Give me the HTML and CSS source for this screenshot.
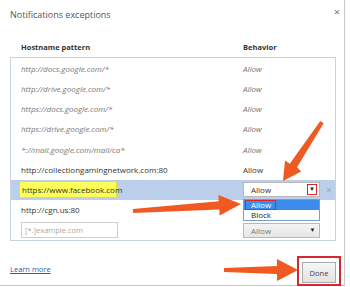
FILE: index.html
```html
<!DOCTYPE html>
<html lang="en">
<head>
    <meta charset="UTF-8">
    <title>Notifications exceptions</title>
    <link rel="stylesheet" href="styles.css">
</head>
<body>
    <div class="dialog">
        <div class="title-bar">
            <h1>Notifications exceptions</h1>
            <span class="close">&times;</span>
        </div>

        <div class="columns">
            <span class="col-host">Hostname pattern</span>
            <span class="col-behavior">Behavior</span>
        </div>

        <div class="list">
            <div class="row muted">
                <span class="host">http://docs.google.com/*</span>
                <span class="behavior">Allow</span>
            </div>
            <div class="row muted">
                <span class="host">http://drive.google.com/*</span>
                <span class="behavior">Allow</span>
            </div>
            <div class="row muted">
                <span class="host">https://docs.google.com/*</span>
                <span class="behavior">Allow</span>
            </div>
            <div class="row muted">
                <span class="host">https://drive.google.com/*</span>
                <span class="behavior">Allow</span>
            </div>
            <div class="row muted">
                <span class="host">*://mail.google.com/mail/ca*</span>
                <span class="behavior">Allow</span>
            </div>
            <div class="row">
                <span class="host">http://collectiongamingnetwork.com:80</span>
                <span class="behavior">Allow</span>
            </div>
            <div class="row selected">
                <span class="host"><span class="marker">https://www.facebook.com</span></span>
                <span class="behavior">
                    <span class="select open">
                        Allow
                        <span class="select-arrow boxed">&#9660;</span>
                    </span>
                    <span class="remove">&times;</span>
                    <span class="menu">
                        <span class="option active"><span class="ring">Allow</span></span>
                        <span class="option">Block</span>
                    </span>
                </span>
            </div>
            <div class="row">
                <span class="host">http://cgn.us:80</span>
                <span class="behavior"></span>
            </div>
            <div class="row">
                <span class="host"><input type="text" class="pattern" placeholder="[*.]example.com"></span>
                <span class="behavior">
                    <span class="select grey">
                        Allow
                        <span class="select-arrow">&#9660;</span>
                    </span>
                </span>
            </div>
        </div>

        <div class="footer">
            <a href="#" class="learn">Learn more</a>
            <span class="done-ring"><button type="button" class="done">Done</button></span>
        </div>
    </div>

    <!-- orange callout arrows drawn over the screenshot -->
    <svg class="callouts" width="350" height="287" viewBox="0 0 350 287">
        <polygon points="323.7,123.3 297,167.2 301.2,171.5 283,181 285,160.5 289.8,163.8 320.3,121.0"/>
        <polygon points="133.2,213.0 219.3,209.6 219.7,215.6 241,204 218.4,195.0 218.7,201.2 132.8,209.0"/>
        <polygon points="224,272 277,274 277,281 298,270 277,259 277,266 224,268"/>
    </svg>
</body>
</html>
```

FILE: styles.css
```css
body {
    margin: 0;
    background: #fff;
    font-family: 'Segoe UI', 'Open Sans', 'Noto Sans', sans-serif;
    color: #333;
}

.dialog {
    width: 345px;
    height: 286px;
    box-sizing: border-box;
    padding: 0 10px;
    border-right: 1px solid #c8c8c8;
    border-bottom: 1px solid #c8c8c8;
    background: #fff;
}

.title-bar {
    display: flex;
    justify-content: space-between;
    align-items: flex-start;
    height: 36px;
    padding-top: 7px;
    box-sizing: border-box;
}

h1 {
    margin: 0;
    font-size: 9px;
    font-weight: normal;
    color: #555;
    line-height: 16px;
}

.close {
    font-size: 11px;
    line-height: 10px;
    color: #777;
    margin-right: -6px;
}

.columns {
    display: flex;
    height: 21px;
    align-items: center;
    padding-left: 11px;
    font-size: 7.5px;
    font-weight: bold;
    color: #333;
}

.col-host {
    width: 222px;
}

.list {
    width: 326px;
    height: 184px;
    box-sizing: border-box;
    border: 1px solid #c3d4e3;
}

.row {
    display: flex;
    align-items: center;
    height: 20.25px;
    padding-left: 10px;
    font-size: 8px;
    color: #333;
}

.row.muted {
    font-style: italic;
    color: #777;
}

.host {
    width: 222px;
    flex: none;
}

.behavior {
    position: relative;
    display: flex;
    align-items: center;
    height: 100%;
}

.row.selected {
    background: #bccfea;
}

.marker {
    display: inline-block;
    background: #ffff5a;
    border: 1px solid #e6dc3c;
    padding: 2px 2px;
    margin-left: -2px;
    width: 92px;
}

.select {
    display: flex;
    align-items: center;
    justify-content: space-between;
    width: 77px;
    height: 15px;
    box-sizing: border-box;
    border: 1px solid #b8b8b8;
    padding: 0 2px 0 7px;
    background: #fff;
    font-size: 8px;
    color: #333;
}

.select.grey {
    background: linear-gradient(#f4f4f4, #e6e6e6);
    color: #777;
}

.select-arrow {
    font-size: 6px;
    color: #222;
    width: 9px;
    text-align: center;
    line-height: 9px;
}

.select-arrow.boxed {
    border: 1px solid #d8262c;
    background: #fff;
    width: 8px;
    height: 9px;
}

.remove {
    margin-left: 6px;
    font-size: 10px;
    color: #9aa;
}

.menu {
    position: absolute;
    left: 0;
    top: 19px;
    width: 77px;
    box-sizing: border-box;
    border: 1px solid #7a9cc6;
    background: #fff;
    z-index: 2;
}

.option {
    display: block;
    height: 10px;
    line-height: 10px;
    padding-left: 7px;
    font-size: 8px;
    color: #222;
}

.option.active {
    background: #3b8ced;
    color: #fff;
    padding-left: 1px;
}

.ring {
    display: inline-block;
    border: 1px solid #d8262c;
    padding: 0 5px;
    line-height: 8px;
    width: 19px;
}

.pattern {
    width: 97px;
    height: 16px;
    box-sizing: border-box;
    border: 1px solid #cfcfcf;
    padding: 0 3px;
    font-family: inherit;
    font-size: 7.5px;
    color: #333;
}

.pattern::placeholder {
    color: #aaa;
}

.footer {
    display: flex;
    justify-content: space-between;
    align-items: center;
    height: 44px;
}

.learn {
    font-size: 7.5px;
    color: #2a5db0;
    margin-top: 12px;
}

.done-ring {
    display: inline-block;
    border: 2px solid #d8262c;
    padding: 1px 3px;
    margin-top: 16px;
    margin-right: -7px;
}

.done {
    width: 34px;
    height: 21px;
    border: 1px solid #aaa;
    background: linear-gradient(#f6f6f6, #e2e2e2);
    font-family: inherit;
    font-size: 7.5px;
    color: #444;
    padding: 0;
}

.callouts {
    position: absolute;
    left: 0;
    top: 0;
    pointer-events: none;
}

.callouts polygon {
    fill: #f05a22;
}
```
